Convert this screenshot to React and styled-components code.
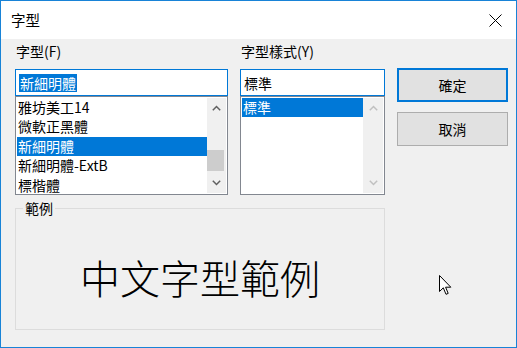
import React from "react";
import styled, { createGlobalStyle } from "styled-components";

const GlobalStyle = createGlobalStyle`
  html, body {
    margin: 0;
    padding: 0;
    background: #f0f0f0;
  }
  * { box-sizing: border-box; }
`;

const Window = styled.div`
  position: relative;
  width: 517px;
  height: 348px;
  border: 1px solid #1883d7;
  background: #f0f0f0;
  font-family: "Noto Sans CJK TC", "Noto Sans", sans-serif;
  font-size: 14px;
  color: #000;
  overflow: hidden;
`;

const TitleBar = styled.div`
  height: 38px;
  background: #fff;
  display: flex;
  align-items: center;
  justify-content: space-between;
  padding: 0 14px 0 10px;
`;

const Title = styled.div`
  font-size: 14.5px;
  line-height: 20px;
`;

const Body = styled.div`
  padding: 2px 8px 0 14px;
  display: flex;
  gap: 12px;
`;

const Column = styled.div`
  width: ${(p) => p.$w}px;
  display: flex;
  flex-direction: column;
`;

const Label = styled.div`
  line-height: 20px;
  height: 20px;
  margin-left: 1px;
  margin-bottom: 8px;
`;

const Input = styled.div`
  height: 27px;
  border: 1px solid #0078d7;
  background: #fff;
  display: flex;
  align-items: center;
  padding-left: 3px;
  line-height: 18px;
`;

const Selected = styled.span`
  background: #0078d7;
  color: #fff;
  padding: 0 1px;
`;

const List = styled.div`
  height: 99px;
  border: 1px solid #828790;
  background: #fff;
  padding: 1px;
  display: flex;
`;

const Items = styled.div`
  flex: 1;
  display: flex;
  flex-direction: column;
`;

const Item = styled.div`
  height: 19.4px;
  line-height: 19.4px;
  padding-left: 1px;
  white-space: nowrap;
  background: ${(p) => (p.$sel ? "#0078d7" : "transparent")};
  color: ${(p) => (p.$sel ? "#fff" : "#000")};
`;

const ScrollBar = styled.div`
  width: ${(p) => p.$w}px;
  background: #f0f0f0;
  display: flex;
  flex-direction: column;
  align-items: stretch;
`;

const Arrow = styled.div`
  height: 20px;
  display: flex;
  align-items: center;
  justify-content: center;
`;

const Track = styled.div`
  flex: 1;
  display: flex;
  flex-direction: column;
  justify-content: flex-end;
`;

const Thumb = styled.div`
  height: 21px;
  background: #cdcdcd;
  margin-bottom: 2px;
  margin-right: 2px;
`;

const Buttons = styled.div`
  width: 111px;
  padding-top: 27px;
  display: flex;
  flex-direction: column;
  gap: 10px;
`;

const Button = styled.div`
  height: 34px;
  background: #e1e1e1;
  border: ${(p) => (p.$default ? "2px solid #0078d7" : "1px solid #adadad")};
  display: flex;
  align-items: center;
  justify-content: center;
`;

const Sample = styled.fieldset`
  margin: 5px 0 0 14px;
  width: 370px;
  height: 130px;
  border: 1px solid #dcdcdc;
  padding: 0;
  display: flex;
  align-items: center;
  justify-content: center;
`;

const Legend = styled.legend`
  margin-left: 7px;
  padding: 0 2px;
  line-height: 16px;
  font-size: 14px;
`;

const SampleText = styled.div`
  width: 100%;
  text-align: center;
  font-size: 40px;
  line-height: 50px;
  padding-top: 8px;
  font-weight: 300;
`;

const Cursor = styled.svg`
  position: absolute;
  left: 438px;
  top: 274px;
`;

const Chevron = ({ up, color }) => (
  <svg width="9" height="6" viewBox="0 0 9 6">
    <path
      d={up ? "M0.8 5.2 L4.5 1.5 L8.2 5.2" : "M0.8 0.8 L4.5 4.5 L8.2 0.8"}
      fill="none"
      stroke={color}
      strokeWidth="1.5"
    />
  </svg>
);

const fonts = ["雅坊美工14", "微軟正黑體", "新細明體", "新細明體-ExtB", "標楷體"];

export default function App() {
  return (
    <>
      <GlobalStyle />
      <Window>
        <TitleBar>
          <Title>字型</Title>
          <svg width="13" height="13" viewBox="0 0 13 13">
            <path d="M0.5 0.5 L12.5 12.5 M12.5 0.5 L0.5 12.5" stroke="#000" strokeWidth="1" />
          </svg>
        </TitleBar>
        <Body>
          <Column $w={213}>
            <Label>字型(F)</Label>
            <Input>
              <Selected>新細明體</Selected>
            </Input>
            <List>
              <Items>
                {fonts.map((f) => (
                  <Item key={f} $sel={f === "新細明體"}>
                    {f}
                  </Item>
                ))}
              </Items>
              <ScrollBar $w={19}>
                <Arrow>
                  <Chevron up color="#606060" />
                </Arrow>
                <Track>
                  <Thumb />
                </Track>
                <Arrow>
                  <Chevron color="#606060" />
                </Arrow>
              </ScrollBar>
            </List>
          </Column>
          <Column $w={145}>
            <Label>字型樣式(Y)</Label>
            <Input>標準</Input>
            <List>
              <Items>
                <Item $sel>標準</Item>
              </Items>
              <ScrollBar $w={20}>
                <Arrow>
                  <Chevron up color="#c0c0c0" />
                </Arrow>
                <Track />
                <Arrow>
                  <Chevron color="#c0c0c0" />
                </Arrow>
              </ScrollBar>
            </List>
          </Column>
          <Buttons>
            <Button $default>確定</Button>
            <Button>取消</Button>
          </Buttons>
        </Body>
        <Sample>
          <Legend>範例</Legend>
          <SampleText>中文字型範例</SampleText>
        </Sample>
        <Cursor width="14" height="21" viewBox="0 0 14 21">
          <path
            d="M0.5 0.5 L0.5 16.5 L4.3 12.8 L7 19.3 L9.2 18.4 L6.6 12.2 L11.8 12.2 Z"
            fill="#fff"
            stroke="#000"
            strokeWidth="1"
            strokeLinejoin="miter"
          />
        </Cursor>
      </Window>
    </>
  );
}
